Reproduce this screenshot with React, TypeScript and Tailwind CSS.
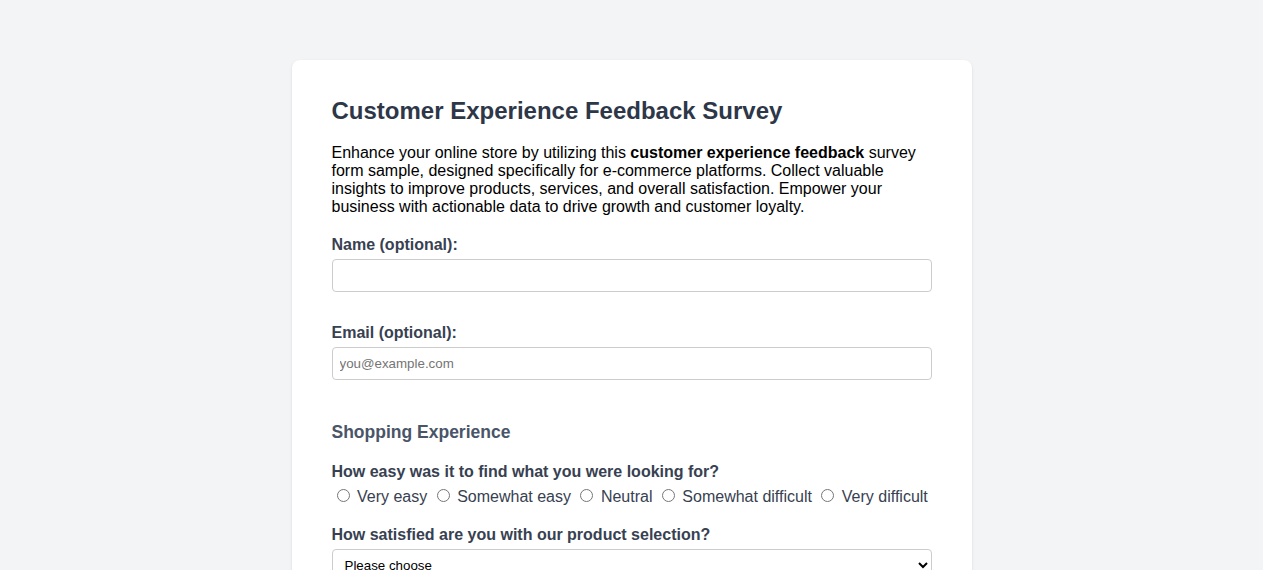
import { useState } from 'react';

const easeOptions = ['Very easy', 'Somewhat easy', 'Neutral', 'Somewhat difficult', 'Very difficult'];

const selectionOptions = [
  'Please choose',
  'Very satisfied',
  'Satisfied',
  'Neutral',
  'Dissatisfied',
  'Very dissatisfied',
];

export default function App() {
  const [ease, setEase] = useState('');
  const [selection, setSelection] = useState('Please choose');

  return (
    <div className="min-h-screen bg-[#f3f4f6] pt-[60px] pb-16 font-['Liberation_Sans',Arial,sans-serif]">
      <div className="mx-auto w-[680px] rounded-lg bg-white px-10 pt-[37px] pb-10 shadow-sm">
        <h1 className="mb-[19px] text-[24px] font-bold leading-[normal] text-[#2d3748]">
          Customer Experience Feedback Survey
        </h1>
        <p className="mb-5 text-base leading-[normal] text-black">
          Enhance your online store by utilizing this <strong>customer experience feedback</strong> survey
          form sample, designed specifically for e-commerce platforms. Collect valuable insights to improve
          products, services, and overall satisfaction. Empower your business with actionable data to drive
          growth and customer loyalty.
        </p>

        <form>
          <div>
            <label htmlFor="name" className="mb-[5px] block font-bold leading-[normal] text-[#374151]">
              Name (optional):
            </label>
            <input
              id="name"
              type="text"
              className="block h-[33px] w-full rounded border border-[#cccccc] px-[7px] text-[13.333px] outline-none"
            />
          </div>

          <div className="mt-8">
            <label htmlFor="email" className="mb-[5px] block font-bold leading-[normal] text-[#374151]">
              Email (optional):
            </label>
            <input
              id="email"
              type="email"
              placeholder="you@example.com"
              className="block h-[33px] w-full rounded border border-[#cccccc] px-[7px] text-[13.333px] outline-none placeholder:text-[#757575]"
            />
          </div>

          <h2 className="mt-[42px] text-[17.5px] font-bold leading-[normal] text-[#4a5568]">
            Shopping Experience
          </h2>

          <div className="mt-5">
            <p className="mb-[5px] font-bold leading-[normal] text-[#374151]">
              How easy was it to find what you were looking for?
            </p>
            <div className="leading-[normal] text-[#374151]">
              {easeOptions.map((o) => (
                <span key={o}>
                  <label>
                    <input
                      type="radio"
                      name="ease"
                      value={o}
                      checked={ease === o}
                      onChange={() => setEase(o)}
                      className="mt-[3px] mr-[3px] ml-[5px]"
                    /> {o}
                  </label>{' '}
                </span>
              ))}
            </div>
          </div>

          <div className="mt-5">
            <label htmlFor="selection" className="mb-[5px] block font-bold leading-[normal] text-[#374151]">
              How satisfied are you with our product selection?
            </label>
            <select
              id="selection"
              value={selection}
              onChange={(e) => setSelection(e.target.value)}
              className="block h-[33px] w-full rounded border border-[#cccccc] bg-white px-2 text-[13.333px] text-black"
            >
              {selectionOptions.map((o) => (
                <option key={o}>{o}</option>
              ))}
            </select>
          </div>

          <div className="mt-5">
            <label htmlFor="comments" className="mb-[5px] block font-bold leading-[normal] text-[#374151]">
              Any other comments?
            </label>
            <textarea
              id="comments"
              rows={4}
              className="block w-full rounded border border-[#cccccc] px-[7px] py-1 text-[13.333px]"
            />
          </div>

          <button
            type="submit"
            className="mt-6 rounded bg-[#2563eb] px-5 py-2 font-bold text-white"
          >
            Submit
          </button>
        </form>
      </div>
    </div>
  );
}
